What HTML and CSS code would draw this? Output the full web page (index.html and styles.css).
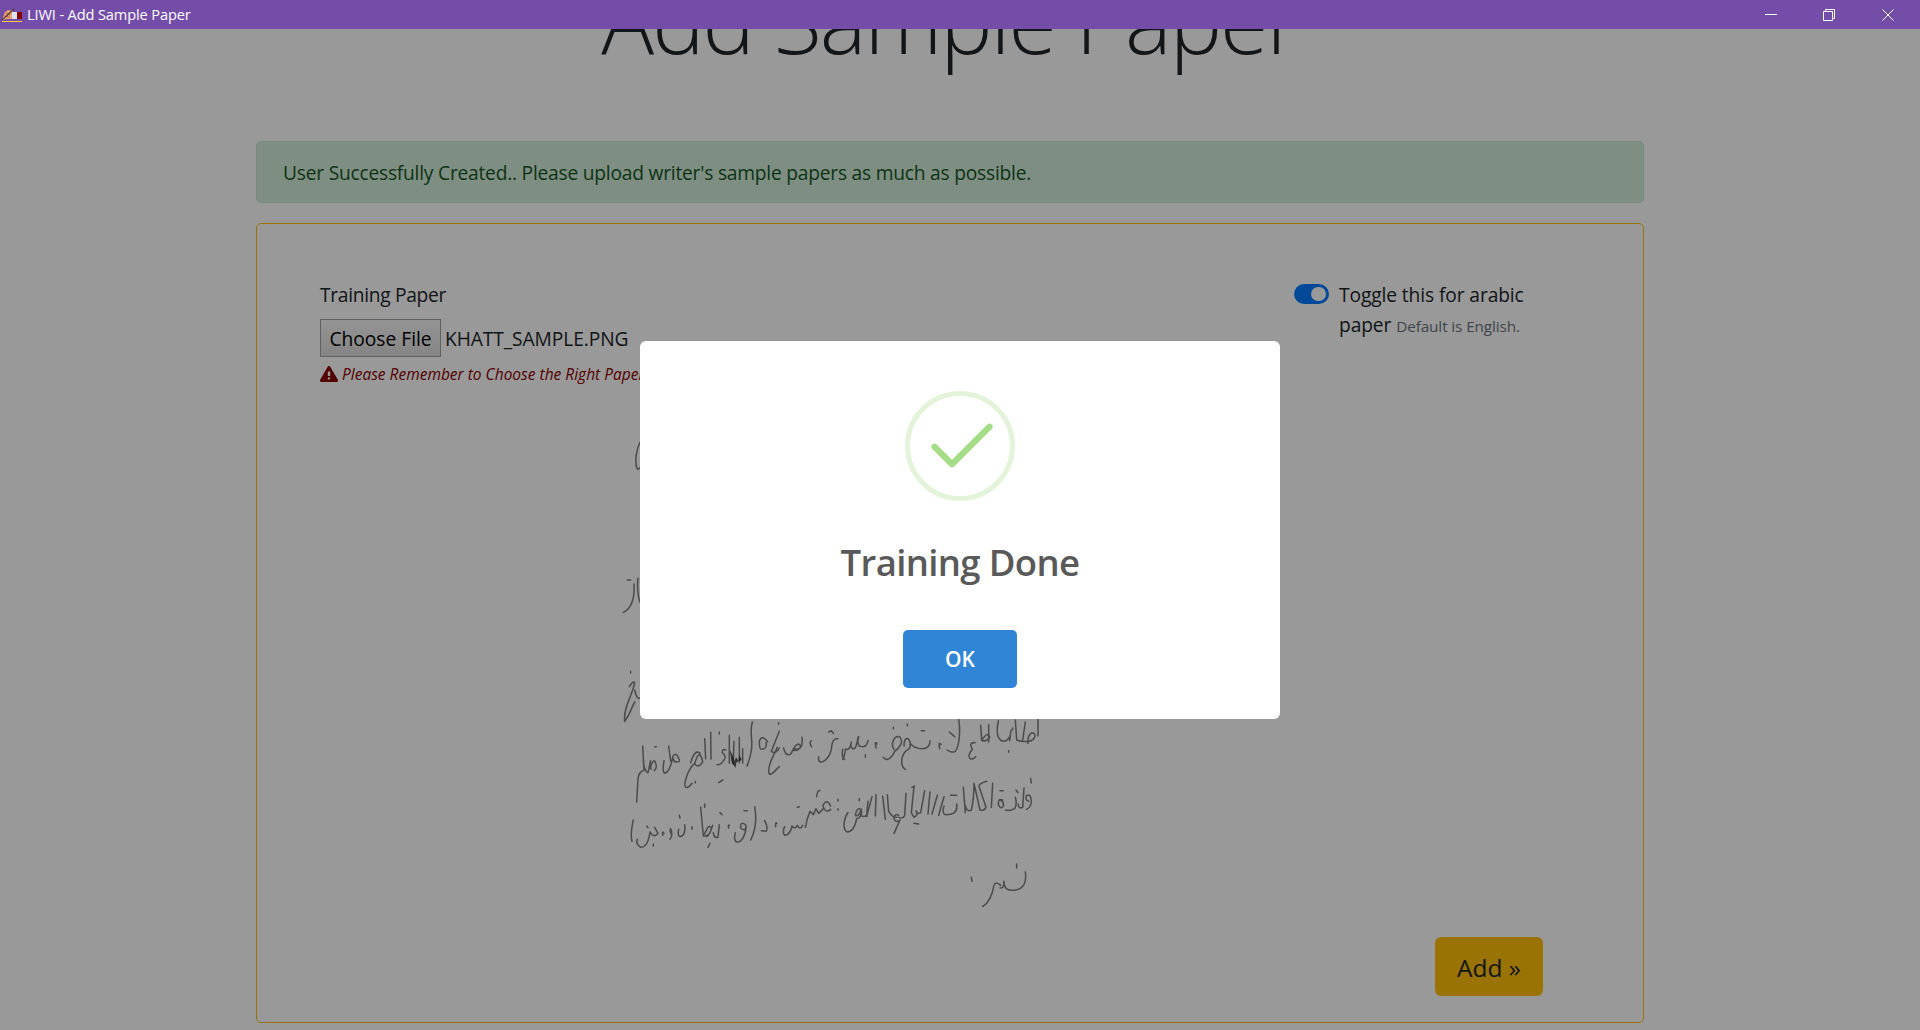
FILE: index.html
```
<!DOCTYPE html>
<html lang="en">
<head>
<meta charset="utf-8">
<title>LIWI - Add Sample Paper</title>
<link rel="stylesheet" href="styles.css">
</head>
<body>
<header class="titlebar">
  <svg class="app-icon" width="22" height="16" viewBox="0 0 22 16">
    <path d="M2 9 4 4 7 2 12 3V11H6L2 12Z" fill="#e8a070"/>
    <path d="M5 5 9 7M4 8 8 9" stroke="#a8664a" fill="none"/>
    <path d="M1 12 13 1" stroke="#4d4038" stroke-width="1.2"/>
    <path d="M11 4h7v7h-7z" fill="#d9e3f2"/>
    <path d="M16 4h5v7h-5z" fill="#800000"/>
    <path d="M1 13.5h20" stroke="#ffc83d"/>
  </svg>
  <span class="app-name">LIWI - Add Sample Paper</span>
  <div class="window-controls">
    <svg width="12" height="12" viewBox="0 0 12 12"><path d="M0 5.5h12"/></svg>
    <svg width="12" height="12" viewBox="0 0 12 12"><path d="M.5 2.5h9v9h-9zM2.500 2.500v-2h9v9h-2"/></svg>
    <svg width="12" height="12" viewBox="0 0 12 12"><path d="M.5.5l11 11M11.500.5l-11 11"/></svg>
  </div>
</header>
<div class="viewport">
  <main class="page">
    <h1 class="heading"><span>Add Sample Paper</span></h1>
    <div class="alert"><span class="alert-text">User Successfully Created.. Please upload writer's sample papers as much as possible.</span></div>
    <section class="card">
      <div class="form-row">
        <div class="upload">
          <div class="upload-label"><span>Training Paper</span></div>
          <div class="file-row"><button class="file-btn" type="button"><span>Choose File</span></button><span class="file-name">KHATT_SAMPLE.PNG</span></div>
          <div class="warning">
            <svg width="18" height="16" viewBox="0 0 18 16"><path d="M7.700.8a1.500 1.500 0 0 1 2.600 0l7.400 12.800A1.500 1.500 0 0 1 16.400 16H1.600A1.500 1.500 0 0 1 .3 13.600Z" fill="#8b0000"/><path d="M9 5.500v4.500M9 11.500v2" stroke="#fff" stroke-width="2.400"/></svg>
            <em>Please Remember to Choose the Right Paper Language</em>
          </div>
        </div>
        <div class="language">
          <span class="switch"></span>
          <div class="switch-label"><div><span class="toggle-text">Toggle this for arabic</span></div><div><span class="toggle-word">paper</span> <small>Default is English.</small></div></div>
        </div>
      </div>
      <svg class="sample" width="440" height="510" viewBox="0 -870 1320 1530">
        <g class="ink">
          <path d="M90-773C80-755 74-720 80-697Q84-688 90-697M52-360h10M72-348C74-310 66-275 40-263M84-365C80-340 86-300 90-294M58-40Q70-60 74-52C66-10 40 20 44 64M44 64C56 50 66 20 74 6M74-30Q80 0 90-6M62-86v5"/>
          <path d="M1284 58v50M1216 60l4 60q14 6 34 4C1278 122 1280 98 1266 98q-14 8-12 32M1246 66l-8 54M1165 62c-8 40-3 58 14 62q14 0 22-18M1203 90l-4 32M1196 152v5M1208 84v5M1136 74v52M1112 76l3 45q14 6 24-10-6-18-24 10M1095 128q-20-2-8 20-16 20-6 28 8 3 16-6M1046 58c6 35 2 80-10 96q-12 6-24-4M1018 96l16 14M993 134q-8-12-4 12"/>
          <path d="M960 122q0 24-24 24-20 0-34-14c-6-26-20-20-20 6M934 92h10M900 132q4 14-12 20c-16 18-18 46-2 56M892 72v5M820 172c10 14 26 2 34-18 18-12 28-32 14-44-14-4-28 20-16 38M850 82v5M801 132q-8-12-3 12M774 122q-4 24-26 16-8-10-2-28M744 112q-6 40-16 34-8-4-4-20-4 26-18 22-2 22-8 30M766 164v8M698 148q-4 24 6 30M684 116q-18-4-20 34-8 28-28 36-12 2-10-16M656 96l8-4 6 8M603 122q-6 8 2 18M576 112q4 32-14 36l-12-2q16-24 22-6-10 16-24 10c-6 20-22 20-27-6"/>
          <path d="M508 94l-24 60q14 10 24-10M502 142c-14 30-32 62-24 80 6 6 20-14 30-22M506 68v5M473 126q-18-24-25-2 0 24 6 24 18 0 14-20M427 66c-10 30 4 60-4 90-2 16-6 26-12 42M388 112v76M372 124c-2 34 0 60-4 68M358 106v84M398 146v44M347 150q-10-6-10 8 10 6 8 16-10 22-24 20M338 240l-12 8M328 96v6M302 97l1 80M284 116l3 60M278 184c-8-34-16-18-24 6q10 18 24-4M270 160q-16-14-28 28M254 190c-20 16-36 66-26 72q6 4 18-12M256 244v5M208 180q-10-28-20-10 2 22 20 14M188 172q-8 44-24 48-8-4-2-38M176 138l6 46M133 212q12-12 0-30-14 10-10 26M134 140h5M122 182l-8 36q-12-4-14-36M98 138l4 72q-16 6-18 26l-4 70"/>
          <path d="M1262 235l2 14M1256 304q-12-4-6-18 14-6 14 20-2 16-14 22M1242 264l-4 58q-12 6-14-10M1218 270l6 8M1216 292q6 20-2 34-14 8-28 4M1178 300q-16-6-12 16 8 14 14 2 2-12-8-18M1170 272h10M1148 250l-4 72M1130 244q-28 8-22 18l20 60q-4 12-18 8l-18-80q0 46-8 80-14 8-18-14M1060 262l6 76M1040 312c4 28-14 32-34 32-8-2-8-14-4-26M1022 286h18M1002 290l-16 56M982 286l-16 56M960 276l-6 66M944 272l-12 66q-10 6-14-6M912 260l-8 78 8 14q12-6 8-18M906 262l8-4M912 370l14 2M888 280l-4 66q-4 12-18 6M866 346q-12-8-14 10 4 14 18 4l-18 40M832 284l4 50q12 20 24 18M818 288l8 70M798 284l-2 64M786 290l-16 60M774 304l-4 42q-14 8-20-4M754 328q-14-8-18 18 10 6 18-18 4 24-14 28-8 40-28 40-14-6-8-36 4-16 10-22M748 296v6"/>
          <path d="M684 298v5M684 326v5M662 318q-12-26-24 0 10 24 24 10M640 326l-14 14-8-14-8 18-10-10-8 22-6 26M620 290q2-22 10-18M578 376q-8 16-16 0-8 14-16 2-6 28-22 28-8-8 0-26M562 322l6-2M500 370q-4-6-3 10M464 362q12 24 4 32l-14-2M434 320q10 56-12 100M406 374q-16-12-14 10 16 14 16-8c0 28-12 52-28 50q-10-4-4-28M402 332h10M358 376q-4-4-2 8M328 374l-4 38q-12 4-14-14M330 338l6 6M308 376q-10 32-18 34M272 322l8 86q20 2 24-22-6-20-20 16M284 312v10M300 430l-6 12M246 380v8M224 374q4 32-14 36-8-2-4-22M208 346l2 8M184 402q-6-8-2-16 8 20-2 32M162 400q-6-10-4 6M134 382l10 18q-12 16-24-4-6 46-28 46-16-10-10-24M110 378l4 5M130 432v6M70 360q-10 42-4 64"/>
          <path d="M1246 516c4 30-4 50-28 54-26 4-36-4-36-26 0 20-6 20-12 20M1220 492v12M1172 556q-16-14-20 0c-6 34-18 54-34 64M1084 532l2 12"/>
        </g>
        <path class="blot" d="M360 150l4 34 12 20 4-18 16-6-8-14-2 16-8-10-4 12-6-18Z"/>
      </svg>
      <div class="actions"><button class="add-btn" type="button"><span>Add »</span></button></div>
    </section>
  </main>
  <div class="backdrop">
    <div class="modal">
      <svg class="success" width="110" height="110" viewBox="0 0 110 110"><circle cx="55" cy="55" r="52.500" fill="none" stroke="#e4f4da" stroke-width="5"/><path d="M29.500 55.700 47 73.200 84.500 35.700" fill="none" stroke="#a5dc86" stroke-width="6.200" stroke-linecap="round" stroke-linejoin="round"/></svg>
      <h2 class="modal-title"><span>Training Done</span></h2>
      <button class="ok" type="button">OK</button>
    </div>
  </div>
</div>
</body>
</html>
```
FILE: styles.css
```
* { box-sizing: border-box; }
body {
  margin: 0;
  height: 1030px;
  overflow: hidden;
  display: flex;
  flex-direction: column;
  font: 400 19.200px/30px "Open Sans", "Noto Sans", sans-serif;
  color: #212529;
}
button { font: inherit; color: inherit; }
.titlebar {
  flex: none;
  height: 29px;
  display: flex;
  align-items: center;
  padding: 0 9px 0 1px;
  background: #744da9;
  color: #fff;
}
.app-icon { margin-top: 2px; }
.app-name { margin: -2px 0 0 4px; font: 400 14.600px/20px "Open Sans", sans-serif; letter-spacing: -.13px; }
.window-controls { margin-left: auto; display: flex; gap: 47px; padding-right: 17px; }
.window-controls svg { fill: none; stroke: #fff; stroke-width: 1; }
.window-controls svg:first-child { margin-right: -1px; }
.viewport { position: relative; flex: 1; overflow: hidden; background: #fff; }
.page { width: 1388px; margin-left: 256px; }
.heading {
  margin: -62px 0 67px;
  height: 107px;
  text-align: center;
  font-size: 88px;
  font-weight: 300;
  letter-spacing: -2px;
  line-height: 107px;
  white-space: nowrap;
}
.alert {
  height: 62px;
  padding: 16px 26px;
  border: 1px solid #c3e6cb;
  border-radius: 5px;
  background: #d4edda;
  color: #155724;
}
.alert-text { letter-spacing: -.22px; }
.upload-label { letter-spacing: -.3px; }
.card {
  height: 800px;
  margin-top: 20px;
  padding: 56px 100px 0 63px;
  border: 1px solid #ffc107;
  border-radius: 5px;
  display: flex;
  flex-direction: column;
}
.form-row { height: 130px; display: flex; justify-content: space-between; }
.upload { white-space: nowrap; }
.file-row { display: flex; align-items: center; gap: 4px; margin-top: 9px; }
.file-name { padding-top: 2px; letter-spacing: -.08px; }
.file-btn {
  width: 121px;
  height: 38px;
  padding: 2px 0 0;
  border: 1px solid #a0a0a0;
  background: linear-gradient(#f8f8f8, #ddd);
  color: #000;
}
.warning { display: flex; align-items: center; gap: 4px; height: 34px; font-size: 15.500px; color: #8b0000; }
.language { width: 249px; display: flex; gap: 10px; }
.switch {
  width: 35px;
  height: 20px;
  margin-top: 4px;
  padding: 3px 3px 3px 17px;
  border-radius: 10px;
  background: #007bff;
}
.switch::after { content: ""; display: block; width: 15px; height: 14px; border-radius: 8px; background: #fff; }
.switch-label { white-space: nowrap; letter-spacing: -.1px; }
.switch-label small { font-size: 15.300px; color: #6c757d; }
.sample { flex: none; margin-left: 290px; }
.ink { fill: none; stroke: #2a2a2a; stroke-opacity: .6; stroke-width: 4.600; stroke-linecap: round; stroke-linejoin: round; filter: blur(1.200px); }
.blot { fill: #222; fill-opacity: .75; }
.actions { display: flex; justify-content: flex-end; margin-top: 17px; }
.add-btn { width: 108px; height: 59px; padding: 2px 0 0; border: 0; border-radius: 6px; background: #ffc107; font-size: 24.500px; }
.backdrop {
  position: absolute;
  inset: 0;
  display: flex;
  justify-content: center;
  align-items: center;
  background: rgba(0, 0, 0, .4);
}
.modal {
  width: 640px;
  height: 378px;
  padding-top: 50px;
  border-radius: 6px;
  background: #fff;
  display: flex;
  flex-direction: column;
  align-items: center;
}
.modal-title { margin: 33px 0 0; font-size: 36.500px; line-height: 56px; font-weight: 600; letter-spacing: -.65px; color: #595959; }
.ok { width: 114px; height: 58px; margin-top: 40px; border: 0; border-radius: 5px; background: #3085d6; color: #fff; font-size: 21px; font-weight: 600; }
```
